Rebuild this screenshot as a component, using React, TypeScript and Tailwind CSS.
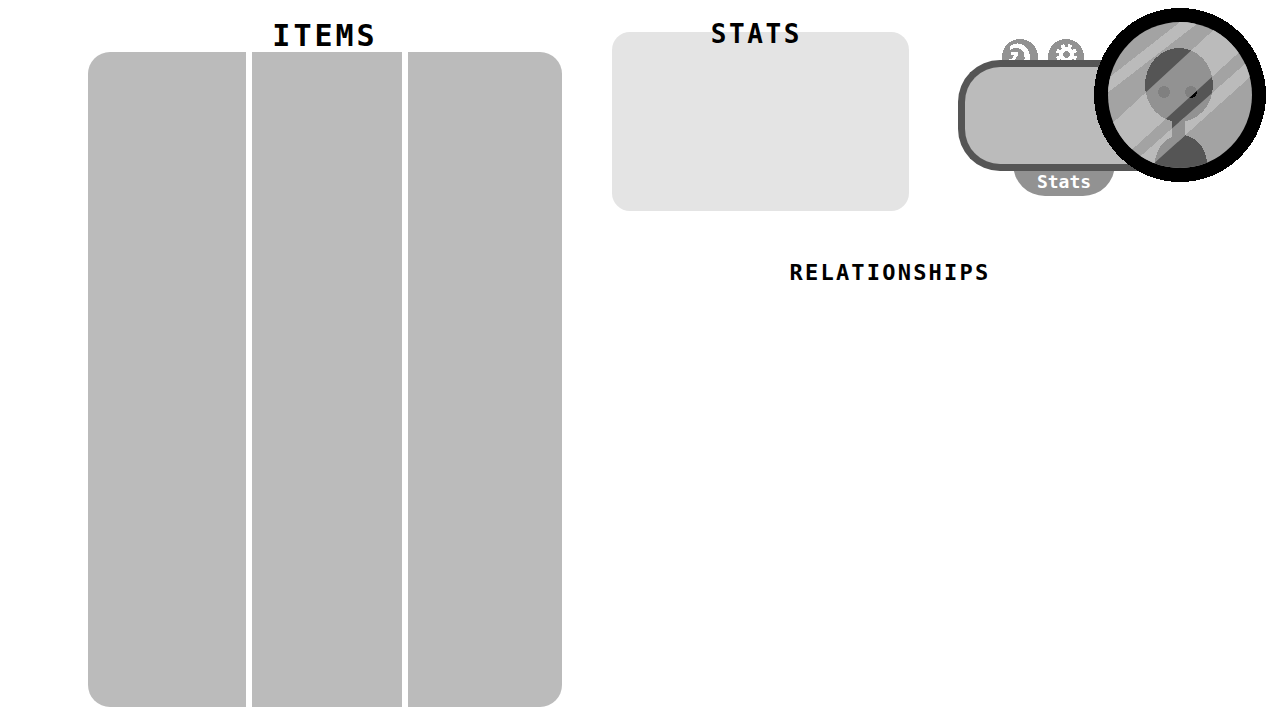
import React from "react";

function Heading({ className, children }: { className: string; children: React.ReactNode }) {
  return (
    <h2 className={`text-center font-bold tracking-widest text-black ${className}`}>{children}</h2>
  );
}

function PhoneIcon() {
  return (
    <svg viewBox="0 0 36 36" className="h-9 w-9" aria-hidden="true" shapeRendering="crispEdges">
      <circle cx="18" cy="18" r="18" fill="#929292" />
      <path
        d="M8 7 C13 3 20 4 24 8 C28 12 28 17 28 24 H22 C23 18 23 14 20 11 C17 9 13 8 8 11 Z"
        fill="#fff"
      />
      <path d="M9 13 H16 V16 L13 21 H16 V24 H7 V20 H10 L12 16 H9 Z" fill="#fff" />
    </svg>
  );
}

function GearIcon() {
  return (
    <svg viewBox="0 0 36 36" className="h-9 w-9" aria-hidden="true" shapeRendering="crispEdges">
      <circle cx="18" cy="18" r="18" fill="#929292" />
      <g transform="translate(18.500 15.500)" fill="#fff">
        <circle r="7.500" />
        {[22, 67, 112, 157, 202, 247, 292, 337].map((angle) => (
          <rect key={angle} x="-2" y="-10.500" width="4" height="5" transform={`rotate(${angle})`} />
        ))}
      </g>
      <circle cx="18.500" cy="15.500" r="3.200" fill="#929292" />
    </svg>
  );
}

function Figure() {
  return (
    <>
      <ellipse cx="85" cy="77" rx="34" ry="37" />
      <rect x="78" y="110" width="13" height="24" />
      <ellipse cx="87" cy="156" rx="26" ry="29" />
    </>
  );
}

function Stripes() {
  return (
    <>
      <polygon points="8,75 86,14 108,12 8,89" />
      <polygon points="10,123 127,15 152,38 31,148" />
      <polygon points="161,47 166,60 57,158 40,154" />
    </>
  );
}

function Avatar() {
  return (
    <svg
      viewBox="0 0 172 174"
      className="relative z-10 w-43 shrink-0"
      role="img"
      aria-label="Player portrait"
      shapeRendering="crispEdges"
    >
      <defs>
        <clipPath id="glass">
          <ellipse cx="86" cy="87" rx="72" ry="73" />
        </clipPath>
        <clipPath id="shine">
          <Stripes />
        </clipPath>
      </defs>
      <ellipse cx="86" cy="87" rx="86" ry="87" fill="#000" />
      <g clipPath="url(#glass)">
        <rect width="172" height="174" fill="#a3a3a3" />
        <g fill="#bbbbbb">
          <Stripes />
        </g>
        <g fill="#555555">
          <Figure />
        </g>
        <circle cx="97" cy="84" r="6" fill="#000" />
        <g clipPath="url(#shine)">
          <g fill="#929292">
            <Figure />
          </g>
          <g fill="#808080">
            <circle cx="70" cy="84" r="6" />
            <circle cx="97" cy="84" r="6" />
          </g>
        </g>
      </g>
    </svg>
  );
}

function Profile() {
  return (
    <aside className="flex w-77 shrink-0 items-start">
      <div className="-mr-15 min-w-0 flex-1 pt-[31px]">
        <div className="flex h-[21px] gap-2.5 overflow-hidden pl-11">
          <button type="button" aria-label="Phone" className="h-9 w-9 shrink-0">
            <PhoneIcon />
          </button>
          <button type="button" aria-label="Settings" className="h-9 w-9 shrink-0">
            <GearIcon />
          </button>
        </div>
        <div className="relative z-10 h-[111px] rounded-l-[42px] border-7 border-r-0 border-[#555555] bg-[#bbbbbb]" />
        <button
          type="button"
          className="-mt-2 ml-[55px] flex h-[33px] w-[102px] items-end justify-center rounded-b-[32px] bg-[#929292] pb-0.5 text-lg leading-6 font-bold text-white"
        >
          Stats
        </button>
      </div>
      <Avatar />
    </aside>
  );
}

export default function App() {
  return (
    <main className="flex min-h-screen gap-12.5 bg-white pl-22 font-['DejaVu_Sans_Mono',monospace]">
      <section className="flex flex-[474] flex-col pt-4 pb-[13px]">
        <Heading className="pt-1 text-3xl leading-8">ITEMS</Heading>
        <div className="grid flex-1 grid-cols-[158fr_150fr_154fr] gap-1.5 overflow-hidden rounded-[22px]">
          <div className="bg-[#bbbbbb]" />
          <div className="bg-[#bbbbbb]" />
          <div className="bg-[#bbbbbb]" />
        </div>
      </section>

      <div className="flex-[668]">
        <div className="flex items-start justify-between pt-2 pr-3.5">
          <section className="mt-6 h-[179px] w-[297px] rounded-[18px] bg-[#e4e4e4]">
            <Heading className="-mt-3 pr-2 text-[26px] leading-7">STATS</Heading>
          </section>
          <Profile />
        </div>
        <section className="pt-12 pr-28">
          <Heading className="text-[22px] leading-7">RELATIONSHIPS</Heading>
        </section>
      </div>
    </main>
  );
}
